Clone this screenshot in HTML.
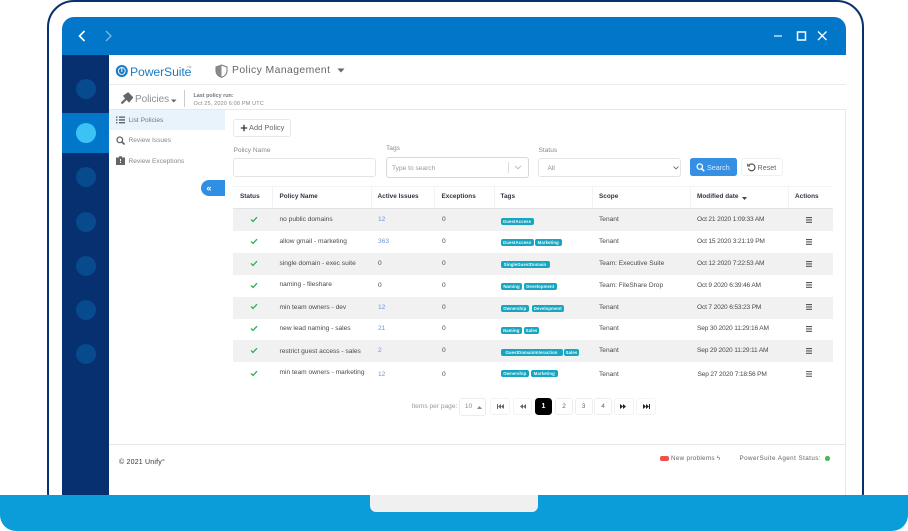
<!DOCTYPE html>
<html><head><meta charset="utf-8">
<style>
html,body{margin:0;padding:0;background:#fff}
#r{position:relative;width:908px;height:531px;overflow:hidden;background:#fff;font-family:"Liberation Sans",sans-serif;color:#555;filter:blur(.3px)}
#r div,#r span.a,#r svg.a{position:absolute}
.t{white-space:nowrap;line-height:10px;height:10px;font-size:6.6px;letter-spacing:0;color:#4a4a4a;margin-top:.5px}
.d{letter-spacing:-.17px}
.h{font-weight:bold;color:#2f3642;font-size:6.4px;letter-spacing:.02px;margin-top:0}
.c{width:20px;height:20px;border-radius:50%;background:#074a8e;left:75.5px}
.row{left:233px;width:600px;background:#f1f1f1}
.tag{height:7px;line-height:7px;background:#17a6c0;color:#eafafd;font-size:4.3px;font-weight:bold;border-radius:2px;white-space:nowrap;letter-spacing:.1px;text-align:center;box-sizing:border-box;margin-top:.5px}
.b{border:1px solid #ececf0;border-radius:3px;box-sizing:border-box;background:#fff;text-align:center;font-size:6.5px;color:#666;line-height:15px;height:17px;top:398px;width:18px}
.lnk{color:#6c97d8}
.inp{border:1px solid #e2e4e8;border-radius:3px;box-sizing:border-box;background:#fff}
.vl{width:1px;background:#f2f2f4;top:186px;height:22px}
</style></head><body>
<div id="r">
<!-- laptop frame -->
<div style="left:46.5px;top:0;width:817px;height:520px;box-sizing:border-box;border:2.5px solid #06306f;border-radius:27px;background:#fff"></div>
<!-- window -->
<div style="left:62px;top:17px;width:784px;height:480px;background:#fff;border-radius:12px 12px 0 0;overflow:hidden"></div>
<div style="left:62px;top:17px;width:784px;height:38px;background:#0277c9;border-radius:12px 12px 0 0"></div>
<div style="left:62px;top:55px;width:46.5px;height:442px;background:#06306f"></div>
<div style="left:62px;top:113px;width:46.5px;height:39.5px;background:#0277c9"></div>
<div class="c" style="top:78.5px"></div>
<div class="c" style="top:123px;background:#3cc3f5"></div>
<div class="c" style="top:167px"></div>
<div class="c" style="top:211.5px"></div>
<div class="c" style="top:255.5px"></div>
<div class="c" style="top:299.5px"></div>
<div class="c" style="top:344px"></div>
<!-- titlebar icons -->
<svg class="a" style="left:76px;top:28px" width="40" height="16" fill="none" stroke-width="1.6"><path d="M8.5 3 L3.5 8 L8.5 13" stroke="#fff"/><path d="M30 3 L35 8 L30 13" stroke="#7fb8e3" stroke-width="1.3"/></svg>
<svg class="a" style="left:772px;top:29px" width="58" height="14" fill="none" stroke="#fff"><path d="M2 7 H10" stroke="#cfe4f5" stroke-width="1.4"/><rect x="25.5" y="3" width="8" height="8" stroke-width="1.5"/><path d="M46 2.5 L54.5 11 M54.5 2.5 L46 11" stroke-width="1.3"/></svg>
<!-- right border content -->
<div style="left:845px;top:84px;width:1px;height:412px;background:#e8e8ec"></div>
<!-- logo bar -->
<svg class="a" style="left:115px;top:64px" width="14" height="14"><circle cx="6.8" cy="7" r="6" fill="#1a7cc4"/><circle cx="6.8" cy="7" r="3.4" fill="none" stroke="#fff" stroke-width=".9"/><path d="M6.8 3v5" stroke="#fff" stroke-width="1"/></svg>
<div class="t" style="left:130px;top:64px;height:14px;line-height:14px;font-size:12.2px;letter-spacing:-.1px;color:#1a7cc4">PowerSuite</div>
<div class="t" style="left:187px;top:64px;font-size:3px;line-height:5px;height:5px;color:#888">TM</div>
<svg class="a" style="left:215px;top:64px" width="13" height="14"><path d="M6.5 1 L12 3 V7 C12 10 9.5 12.3 6.5 13.4 C3.5 12.3 1 10 1 7 V3 Z" fill="#fff" stroke="#777" stroke-width="1"/><path d="M6.5 1.5 V13 C3.5 12 1.5 10 1.5 7 V3.4 Z" fill="#8a8a8a"/></svg>
<div class="t" style="left:232px;top:64.5px;height:12px;line-height:12px;font-size:10.4px;letter-spacing:.42px;color:#666">Policy Management</div>
<svg class="a" style="left:337px;top:68px" width="8" height="5"><path d="M0.5 0.5H7.5L4 4.5Z" fill="#666"/></svg>
<!-- policies bar -->
<div style="left:108.5px;top:84px;width:737px;height:26px;box-sizing:border-box;border-top:1.5px solid #ebebee;border-bottom:1.5px solid #e8e8ec;background:#fff"></div>
<svg class="a" style="left:120px;top:92px" width="13" height="13"><path d="M1.5 11.5 L6 7 M4.5 4 L8 1.5 L12 5.5 L9 9 Z" stroke="#666" stroke-width="2.2" fill="#666"/></svg>
<div class="t" style="left:135px;top:93px;height:12px;line-height:12px;font-size:10px;letter-spacing:-.05px;color:#909090">Policies</div>
<svg class="a" style="left:171px;top:99px" width="6" height="4"><path d="M0 .5H5.5L2.8 3.5Z" fill="#666"/></svg>
<div style="left:184px;top:90px;width:1px;height:17px;background:#ccc"></div>
<div class="t" style="left:193.5px;top:90px;font-size:5.4px;font-weight:bold;color:#777">Last policy run:</div>
<div class="t" style="left:193.5px;top:98px;font-size:5.5px;color:#888;letter-spacing:.17px">Oct 25, 2020 6:08 PM UTC</div>
<!-- sidenav -->
<div style="left:108.5px;top:110px;width:116.5px;height:20px;background:#e9f3fb"></div>
<svg class="a" style="left:116px;top:116px" width="9" height="8" fill="#555"><path d="M0 0.5h1.5v1.3H0zM3 .5h6v1.3H3zM0 3.3h1.5v1.3H0zM3 3.3h6v1.3H3zM0 6.1h1.5v1.3H0zM3 6.1h6v1.3H3z"/></svg>
<div class="t" style="left:128.5px;top:115px;color:#777">List Policies</div>
<svg class="a" style="left:116px;top:136px" width="9" height="9" fill="none" stroke="#666" stroke-width="1.3"><circle cx="3.8" cy="3.8" r="2.8"/><path d="M6 6 L8.5 8.5" stroke-width="1.7"/></svg>
<div class="t" style="left:128.5px;top:135.5px;color:#888">Review Issues</div>
<svg class="a" style="left:116px;top:156px" width="9" height="9" fill="#666"><path d="M0 1.5h3V0.3h3v1.2h3V9H0z"/><path d="M4 3h1v2.2H4zM4 6h1v1H4z" fill="#fff"/></svg>
<div class="t" style="left:128.5px;top:156px;color:#888">Review Exceptions</div>
<div style="left:201px;top:180px;width:24px;height:15.5px;background:#318fe3;border-radius:8px 0 0 8px"></div>
<div class="t" style="left:206.5px;top:182.5px;color:#fff;font-size:9px;font-weight:bold">«</div>
<!-- add policy -->
<div class="inp" style="left:233px;top:119px;width:58px;height:18px;border-color:#e8e8ec"></div>
<svg class="a" style="left:240px;top:124px" width="8" height="8"><path d="M4 .8v6.4M.8 4h6.4" stroke="#333" stroke-width="1.3"/></svg>
<div class="t" style="left:249px;top:122.5px;font-size:7.4px;letter-spacing:.05px;color:#666">Add Policy</div>
<!-- filters -->
<div class="t" style="left:233.5px;top:145px;color:#8b8b8b">Policy Name</div>
<div class="inp" style="left:233px;top:158px;width:143px;height:19px"></div>
<div class="t" style="left:386px;top:143.5px;color:#8b8b8b">Tags</div>
<div class="inp" style="left:386px;top:157px;width:143px;height:21px;border-color:#d8d8dc"></div>
<div class="t" style="left:392px;top:163px;color:#9a9a9a">Type to search</div>
<div style="left:508px;top:162px;width:1px;height:11px;background:#ddd"></div>
<svg class="a" style="left:514px;top:165px" width="8" height="5" fill="none"><path d="M1 .8 L4 3.8 L7 .8" stroke="#bbb"/></svg>
<div class="t" style="left:538.5px;top:145px;color:#8b8b8b">Status</div>
<div class="inp" style="left:538px;top:158px;width:143px;height:19px"></div>
<div class="t" style="left:547.5px;top:163px;color:#8b8b8b">All</div>
<svg class="a" style="left:673px;top:166px" width="6" height="4" fill="none"><path d="M.5.5 L3 3 L5.5.5" stroke="#777" stroke-width=".9"/></svg>
<div style="left:690px;top:158px;width:47px;height:18px;background:#3590e4;border-radius:2.5px"></div>
<svg class="a" style="left:696px;top:163px" width="9" height="9" fill="none" stroke="#fff" stroke-width="1.2"><circle cx="3.8" cy="3.6" r="2.7"/><path d="M5.8 5.8 L8.2 8.2" stroke-width="1.5"/></svg>
<div class="t" style="left:707px;top:162px;color:#dbeafb;font-size:7.2px">Search</div>
<div class="inp" style="left:741px;top:158px;width:42px;height:18px;border-color:#f0f0f3"></div>
<svg class="a" style="left:747px;top:163px" width="9" height="9" fill="none" stroke="#444" stroke-width="1.1"><path d="M2 2.2 A3.4 3.4 0 1 1 1.4 5.5"/><path d="M.8.8 V3 H3" /></svg>
<div class="t" style="left:757.5px;top:162px;color:#666;font-size:7.2px">Reset</div>
<!-- table -->
<div style="left:233px;top:185.5px;width:600px;height:1px;background:#f3f3f5"></div>
<div style="left:233px;top:207.5px;width:600px;height:1px;background:#e2e2e6"></div>
<div class="vl" style="left:272px"></div><div class="vl" style="left:371px"></div><div class="vl" style="left:434px"></div><div class="vl" style="left:494px"></div><div class="vl" style="left:592px"></div><div class="vl" style="left:690px"></div><div class="vl" style="left:788px"></div>
<div class="row" style="top:208.5px;height:22.5px"></div>
<div class="row" style="top:252.5px;height:22.5px"></div>
<div class="row" style="top:296.5px;height:22px"></div>
<div class="row" style="top:339.5px;height:22.5px"></div>
<div class="t h" style="left:240px;top:192px">Status</div>
<div class="t h" style="left:279.5px;top:192px">Policy Name</div>
<div class="t h" style="left:377.5px;top:192px">Active Issues</div>
<div class="t h" style="left:441.5px;top:192px">Exceptions</div>
<div class="t h" style="left:500.5px;top:192px">Tags</div>
<div class="t h" style="left:599px;top:192px">Scope</div>
<div class="t h" style="left:697px;top:192px">Modified date</div>
<svg class="a" style="left:741.5px;top:197px" width="5" height="3"><path d="M0 0H5L2.5 3Z" fill="#444"/></svg>
<div class="t h" style="left:795px;top:192px">Actions</div>

<!-- row 1 -->
<svg class="a" style="left:249.5px;top:216px" width="8" height="7" fill="none"><path d="M1 3.4 L3 5.4 L7 1.2" stroke="#2fae55" stroke-width="1.3"/></svg>
<div class="t" style="left:279.5px;top:214.5px">no public domains</div>
<div class="t lnk" style="left:378px;top:214.5px">12</div>
<div class="t" style="left:442px;top:214.5px">0</div>
<div class="tag a" style="left:500.5px;top:217px;width:33px">GuestAccess</div>
<div class="t" style="left:599px;top:214.5px">Tenant</div>
<div class="t d" style="left:697px;top:214.5px">Oct 21 2020 1:09:33 AM</div>
<svg class="a" style="left:806px;top:216.5px" width="6" height="6" fill="#555"><path d="M0 0h6v1.1H0zM0 2.4h6v1.1H0zM0 4.8h6v1.1H0z"/></svg>
<!-- row 2 -->
<svg class="a" style="left:249.5px;top:238px" width="8" height="7" fill="none"><path d="M1 3.4 L3 5.4 L7 1.2" stroke="#2fae55" stroke-width="1.3"/></svg>
<div class="t" style="left:279.5px;top:236.5px">allow gmail - marketing</div>
<div class="t lnk" style="left:378px;top:236.5px">363</div>
<div class="t" style="left:442px;top:236.5px">0</div>
<div class="tag a" style="left:500.5px;top:238.5px;width:33px">GuestAccess</div>
<div class="tag a" style="left:535px;top:238.5px;width:26.5px">Marketing</div>
<div class="t" style="left:599px;top:236.5px">Tenant</div>
<div class="t d" style="left:697px;top:236.5px">Oct 15 2020 3:21:19 PM</div>
<svg class="a" style="left:806px;top:238.5px" width="6" height="6" fill="#555"><path d="M0 0h6v1.1H0zM0 2.4h6v1.1H0zM0 4.8h6v1.1H0z"/></svg>
<!-- row 3 -->
<svg class="a" style="left:249.5px;top:259.5px" width="8" height="7" fill="none"><path d="M1 3.4 L3 5.4 L7 1.2" stroke="#2fae55" stroke-width="1.3"/></svg>
<div class="t" style="left:279.5px;top:258px">single domain - exec suite</div>
<div class="t" style="left:378px;top:258.5px">0</div>
<div class="t" style="left:442px;top:258.5px">0</div>
<div class="tag a" style="left:500.5px;top:260.5px;width:49px">SingleGuestDomain</div>
<div class="t" style="left:599px;top:258.5px">Team: Executive Suite</div>
<div class="t d" style="left:697px;top:258.5px">Oct 12 2020 7:22:53 AM</div>
<svg class="a" style="left:806px;top:260.5px" width="6" height="6" fill="#555"><path d="M0 0h6v1.1H0zM0 2.4h6v1.1H0zM0 4.8h6v1.1H0z"/></svg>
<!-- row 4 -->
<svg class="a" style="left:249.5px;top:281.5px" width="8" height="7" fill="none"><path d="M1 3.4 L3 5.4 L7 1.2" stroke="#2fae55" stroke-width="1.3"/></svg>
<div class="t" style="left:279.5px;top:279.5px">naming - fileshare</div>
<div class="t" style="left:378px;top:280px">0</div>
<div class="t" style="left:442px;top:280px">0</div>
<div class="tag a" style="left:501px;top:282px;width:21px">Naming</div>
<div class="tag a" style="left:524px;top:282px;width:32.5px">Development</div>
<div class="t" style="left:599px;top:280px">Team: FileShare Drop</div>
<div class="t d" style="left:697px;top:280px">Oct 9 2020 6:39:46 AM</div>
<svg class="a" style="left:806px;top:282px" width="6" height="6" fill="#555"><path d="M0 0h6v1.1H0zM0 2.4h6v1.1H0zM0 4.8h6v1.1H0z"/></svg>
<!-- row 5 -->
<svg class="a" style="left:249.5px;top:303px" width="8" height="7" fill="none"><path d="M1 3.4 L3 5.4 L7 1.2" stroke="#2fae55" stroke-width="1.3"/></svg>
<div class="t" style="left:279.5px;top:302px">min team owners - dev</div>
<div class="t lnk" style="left:378px;top:302px">12</div>
<div class="t" style="left:442px;top:302px">0</div>
<div class="tag a" style="left:501px;top:304px;width:27.5px">Ownership</div>
<div class="tag a" style="left:531.5px;top:304px;width:32.5px">Development</div>
<div class="t" style="left:599px;top:302px">Tenant</div>
<div class="t d" style="left:697px;top:302px">Oct 7 2020 6:53:23 PM</div>
<svg class="a" style="left:806px;top:304px" width="6" height="6" fill="#555"><path d="M0 0h6v1.1H0zM0 2.4h6v1.1H0zM0 4.8h6v1.1H0z"/></svg>
<!-- row 6 -->
<svg class="a" style="left:249.5px;top:325px" width="8" height="7" fill="none"><path d="M1 3.4 L3 5.4 L7 1.2" stroke="#2fae55" stroke-width="1.3"/></svg>
<div class="t" style="left:279.5px;top:323.5px">new lead naming - sales</div>
<div class="t lnk" style="left:378px;top:323.5px">21</div>
<div class="t" style="left:442px;top:323.5px">0</div>
<div class="tag a" style="left:500.5px;top:326px;width:21.5px">Naming</div>
<div class="tag a" style="left:524px;top:326px;width:15px">Sales</div>
<div class="t" style="left:599px;top:323.5px">Tenant</div>
<div class="t d" style="left:697px;top:323.5px">Sep 30 2020 11:29:16 AM</div>
<svg class="a" style="left:806px;top:325.5px" width="6" height="6" fill="#555"><path d="M0 0h6v1.1H0zM0 2.4h6v1.1H0zM0 4.8h6v1.1H0z"/></svg>
<!-- row 7 -->
<svg class="a" style="left:249.5px;top:347px" width="8" height="7" fill="none"><path d="M1 3.4 L3 5.4 L7 1.2" stroke="#2fae55" stroke-width="1.3"/></svg>
<div class="t" style="left:279.5px;top:346px">restrict guest access - sales</div>
<div class="t lnk" style="left:378px;top:345.5px">2</div>
<div class="t" style="left:442px;top:345.5px">0</div>
<div class="tag a" style="left:500.5px;top:348px;width:62px">GuestDomainInteraction</div>
<div class="tag a" style="left:564px;top:348px;width:15px">Sales</div>
<div class="t" style="left:599px;top:345.5px">Tenant</div>
<div class="t d" style="left:697px;top:345.5px">Sep 29 2020 11:29:11 AM</div>
<svg class="a" style="left:806px;top:347.5px" width="6" height="6" fill="#555"><path d="M0 0h6v1.1H0zM0 2.4h6v1.1H0zM0 4.8h6v1.1H0z"/></svg>
<!-- row 8 -->
<svg class="a" style="left:250px;top:370px" width="8" height="7" fill="none"><path d="M1 3.4 L3 5.4 L7 1.2" stroke="#2fae55" stroke-width="1.3"/></svg>
<div class="t" style="left:279.5px;top:367px">min team owners - marketing</div>
<div class="t lnk" style="left:378px;top:369px">12</div>
<div class="t" style="left:442px;top:369px">0</div>
<div class="tag a" style="left:501px;top:369px;width:27.5px">Ownership</div>
<div class="tag a" style="left:531px;top:369px;width:26.5px">Marketing</div>
<div class="t" style="left:599px;top:369px">Tenant</div>
<div class="t d" style="left:697.5px;top:369px">Sep 27 2020 7:18:56 PM</div>
<svg class="a" style="left:806px;top:371px" width="6" height="6" fill="#666"><path d="M0 0h6v1.1H0zM0 2.4h6v1.1H0zM0 4.8h6v1.1H0z"/></svg>
<!-- pagination -->
<div class="t" style="left:411.5px;top:401.5px;color:#999">Items per page:</div>
<div class="b a" style="left:459px;top:398px;width:27px;height:18px;color:#888;padding-right:8px">10</div>
<svg class="a" style="left:476.5px;top:406px" width="5" height="3"><path d="M0 3H5L2.5 0Z" fill="#888"/></svg>
<div class="b a" style="left:490px;border-color:#f3f3f5;width:20px"></div>
<div class="b a" style="left:513px;border-color:#f3f3f5;width:19px"></div>
<div class="b a" style="left:535px;width:17px;background:#000;color:#fff;border-color:#000;border-radius:3.5px;font-size:7px;font-weight:bold">1</div>
<div class="b a" style="left:555px;border-color:#ededf0">2</div>
<div class="b a" style="left:574.5px;border-color:#ededf0">3</div>
<div class="b a" style="left:594px;border-color:#ededf0">4</div>
<div class="b a" style="left:613.5px;border-color:#f3f3f5;width:20px"></div>
<div class="b a" style="left:636px;border-color:#f3f3f5;width:20px"></div>
<svg class="a" style="left:497px;top:404px" width="7" height="5" fill="#666"><path d="M0 0h1v5H0zM4 0v5L1 2.5zM7 0v5L4 2.5z"/></svg>
<svg class="a" style="left:519px;top:404px" width="7" height="5" fill="#666"><path d="M4 0v5L1 2.5zM7 0v5L4 2.5z"/></svg>
<svg class="a" style="left:620px;top:404px" width="7" height="5" fill="#222"><path d="M0 0v5L3 2.5zM3 0v5L6 2.5z"/></svg>
<svg class="a" style="left:643px;top:404px" width="7" height="5" fill="#222"><path d="M0 0v5L3 2.5zM3 0v5L6 2.5zM6 0h1v5H6z"/></svg>
<!-- footer -->
<div style="left:108.5px;top:444px;width:737px;height:1px;background:#e6e6ec"></div>
<div class="t" style="left:119px;top:457.5px;font-size:7px;letter-spacing:.2px;color:#333">© 2021 Unify°</div>
<div style="left:660px;top:456px;width:9px;height:5px;background:#f0514f;border-radius:2px"></div>
<div class="t" style="left:671px;top:453px;font-size:6.3px;letter-spacing:.3px;color:#666">New problems ϟ</div>
<div class="t" style="left:739.5px;top:453px;font-size:6.3px;letter-spacing:.42px;color:#666">PowerSuite Agent Status:</div>
<div style="left:825px;top:456px;width:4.5px;height:4.5px;border-radius:50%;background:#4cb85c"></div>
<!-- base -->
<div style="left:0;top:494.5px;width:908px;height:36.5px;background:#0b9dd9;border-radius:0 0 16px 16px"></div>
<div style="left:370px;top:494.5px;width:168px;height:17.5px;background:#f0f0f0;border-radius:0 0 6px 6px"></div>
</div>
</body></html>
